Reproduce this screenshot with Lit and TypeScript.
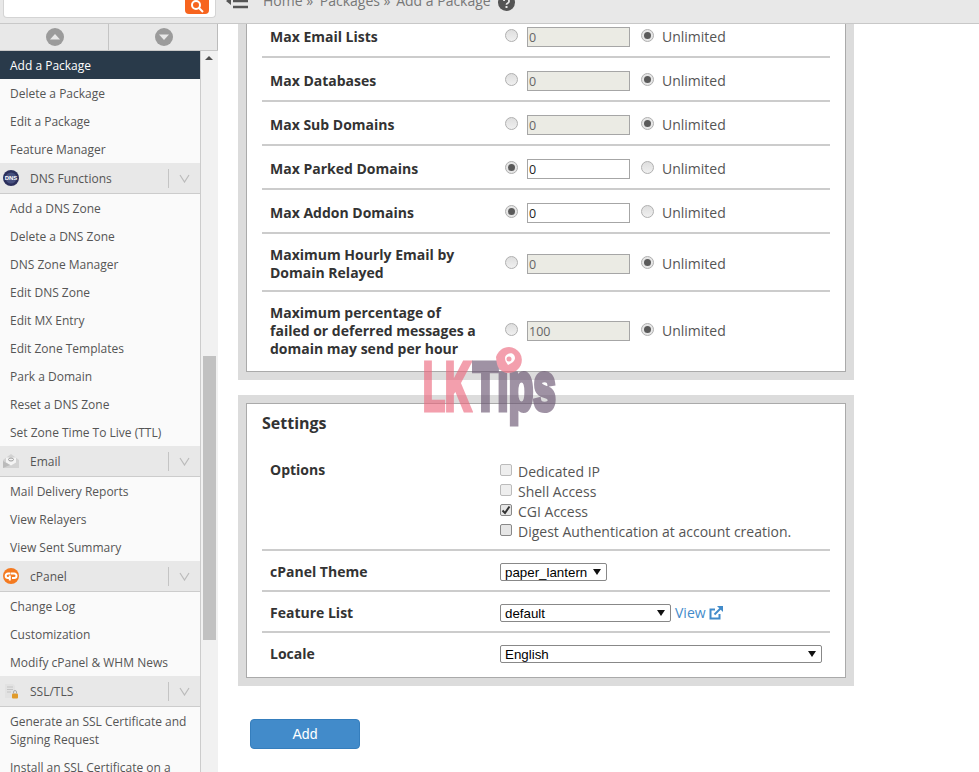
import { LitElement, html, css, svg } from "lit";
import { customElement } from "lit/decorators.js";

type Row = { label: string; val: string; limited: boolean };
const rows: Row[] = [
  { label: "Max Email Lists", val: "0", limited: false },
  { label: "Max Databases", val: "0", limited: false },
  { label: "Max Sub Domains", val: "0", limited: false },
  { label: "Max Parked Domains", val: "0", limited: true },
  { label: "Max Addon Domains", val: "0", limited: true },
  { label: "Maximum Hourly Email by Domain Relayed", val: "0", limited: false },
  { label: "Maximum percentage of failed or deferred messages a domain may send per hour", val: "100", limited: false },
];

const icons: Record<string, unknown> = {
  dns: svg`<svg class="gi" width="16" height="16" viewBox="0 0 16 16"><circle cx="8" cy="8" r="8" fill="#2b2f5c"/><circle cx="8" cy="8" r="5.500" fill="#47507f"/><text x="8" y="10" font-size="6" font-weight="700" text-anchor="middle" fill="#fff" font-family="Liberation Sans">DNS</text></svg>`,
  email: svg`<svg class="gi" width="16" height="16" viewBox="0 0 16 16"><path d="M0 7 8 1l8 6v8H0z" fill="#d2d2d2"/><path d="M3 4.500h10v5l-5 3-5-3z" fill="#f4f4f4"/><ellipse cx="8" cy="6.500" rx="2.500" ry="1.500" fill="none" stroke="#999"/><path d="M0 8l7 4-7 3z" fill="#bbb"/></svg>`,
  cpanel: svg`<svg class="gi" width="16" height="16" viewBox="0 0 16 16"><circle cx="8" cy="8" r="8" fill="#f47a20"/><path d="M7.500 5.500H5a2.300 2.300 0 0 0 0 4.600h1.500M6.800 12.500V7.500M8 5.500h3.200a2.300 2.300 0 0 1 0 4.600H9" fill="none" stroke="#fff" stroke-width="2"/></svg>`,
  ssl: svg`<svg class="gi" width="16" height="16" viewBox="0 0 16 16"><path d="M2 1h8l2 2v12H2z" fill="#e2e2e2"/><path d="M4 4h6M4 6.500h6M4 9h4" stroke="#c4c4c4"/><rect x="9" y="10.500" width="6" height="5" rx="1" fill="#e09a2a"/><path d="M10.500 10.500V9a1.500 1.500 0 0 1 3 0v1.500" fill="none" stroke="#aaa"/></svg>`,
};

type Group = { name?: string; icon?: string; items: string[] };
const groups: Group[] = [
  { items: ["Add a Package", "Delete a Package", "Edit a Package", "Feature Manager"] },
  { name: "DNS Functions", icon: "dns", items: ["Add a DNS Zone", "Delete a DNS Zone", "DNS Zone Manager", "Edit DNS Zone", "Edit MX Entry", "Edit Zone Templates", "Park a Domain", "Reset a DNS Zone", "Set Zone Time To Live (TTL)"] },
  { name: "Email", icon: "email", items: ["Mail Delivery Reports", "View Relayers", "View Sent Summary"] },
  { name: "cPanel", icon: "cpanel", items: ["Change Log", "Customization", "Modify cPanel & WHM News"] },
  { name: "SSL/TLS", icon: "ssl", items: ["Generate an SSL Certificate and Signing Request", "Install an SSL Certificate on a Domain"] },
];

@customElement("app-root")
export class AppRoot extends LitElement {
  static styles = css`
    :host { display: grid; grid-template-columns: 218px 761px; width: 979px; height: 772px; overflow: hidden; position: relative; background: #fff; font-family: "Open Sans", sans-serif; color: #333; }
    .side { display: flex; flex-direction: column; height: 772px; overflow: hidden; }
    .searchwrap { height: 23px; flex: none; background: #e8e8e8; border-bottom: 1px solid #c8c8c8; padding: 0 2px 0 3px; }
    .search { height: 18px; background: #fff; border: 1px solid #d4d4d4; border-top: 0; border-radius: 0 0 4px 4px; box-sizing: border-box; display: flex; justify-content: flex-end; padding-right: 6px; }
    .sbtn { width: 24px; height: 14px; background: #f7641e; border-radius: 0 0 4px 4px; display: flex; justify-content: center; align-items: flex-end; overflow: hidden; }
    .arrows { height: 26px; flex: none; display: grid; grid-template-columns: 109px 109px; background: #e8e8e8; border-bottom: 1px solid #c8c8c8; }
    .arrows div { display: flex; align-items: center; justify-content: center; border-right: 1px solid #c4c4c4; padding-left: 2px; }
    .arrows div:last-child { border-right: 1px solid #bbb; }
    .menuwrap { display: flex; flex: 1; min-height: 0; }
    .menu { width: 201px; flex: none; background: #fafafa; border-right: 1px solid #ccc; box-sizing: border-box; }
    .item { font-size: 12px; line-height: 18px; padding: 6px 10px 4px; color: #555; }
    .item.active { background: #293a4a; color: #fff; }
    .ghead { height: 31px; box-sizing: border-box; background: #e8e8e8; border-bottom: 1px solid #ccc; display: flex; align-items: center; font-size: 12px; color: #555; padding-left: 3px; }
    .gi { flex: none; }
    .nm { margin-left: 11px; flex: 1; }
    .sep { width: 1px; height: 19px; background: #c4c4c4; }
    .chev { width: 31px; display: flex; justify-content: center; }
    .sb { width: 17px; flex: none; background: #f1f1f1; position: relative; }
    .up { position: absolute; left: 4px; top: 5px; width: 0; height: 0; border: 4px solid transparent; border-top: 0; border-bottom: 4px solid #505050; }
    .th { position: absolute; left: 2px; width: 13px; top: 305px; height: 284px; background: #c1c1c1; }
    .main { display: flex; flex-direction: column; height: 772px; overflow: hidden; }
    .top { height: 23px; flex: none; background: #e8e8e8; border-bottom: 1px solid #c8c8c8; overflow: hidden; position: relative; }
    .burger { position: absolute; left: 8px; top: -7px; }
    .crumbs { position: absolute; left: 45px; top: -9px; font-size: 14px; line-height: 20px; color: #777; white-space: nowrap; display: flex; align-items: center; }
    .c1 { margin-right: 3px; }
    .c2 { margin-right: 2px; }
    .help { margin-left: 7px; margin-top: 3px; }
    .scroll { flex: 1; min-height: 0; padding: 0 0 0 20px; }
    .panel { width: 616px; box-sizing: border-box; border: 8px solid #dcdcdc; background: #fff; }
    .inner { border: 1px solid #aaa; padding: 0 15px; }
    .first { margin-top: -19px; }
    .second { margin-top: 15px; }
    .row { display: flex; align-items: center; padding: 12px 0 8px; border-bottom: 2px solid #ccc; min-height: 22px; }
    .row.last { border-bottom: 0; padding-bottom: 13px; }
    .lbl { width: 243px; flex: none; box-sizing: border-box; padding: 0 25px 0 8px; font-size: 14px; line-height: 18px; font-weight: 700; color: #333; }
    .radio { width: 13px; height: 13px; border-radius: 50%; border: 1px solid #b0b0b0; box-sizing: border-box; background: linear-gradient(#dedede, #f0f0f0); flex: none; margin-bottom: 4px; display: flex; align-items: center; justify-content: center; }
    .radio.on { background: #e6e6e6; }
    .radio.on::after { content: ""; width: 7px; height: 7px; border-radius: 50%; background: #5a5a5a; }
    .num { width: 103px; height: 20px; box-sizing: border-box; margin: 0 11px 0 9px; border: 1px solid #a6a6a6; padding: 0 1px; font: 12.500px "Open Sans", sans-serif; color: #222; background: #fff; display: flex; align-items: center; }
    .num.dis { background: #ebebe4; color: #666; }
    .unl { margin-left: 8px; margin-bottom: 2px; font-size: 14px; color: #555; }
    h2 { margin: 0; padding: 8px 0 0; font-size: 16px; line-height: 22px; font-weight: 700; color: #333; }
    .opts { padding-top: 27px; align-items: flex-start; }
    .opts .lbl { width: 238px; }
    .list { display: flex; flex-direction: column; }
    .chk { display: flex; align-items: center; height: 20px; font-size: 14px; color: #555; }
    .box { width: 12px; height: 12px; box-sizing: border-box; border: 1px solid #bbb; border-radius: 2px; background: #eee; margin-right: 6px; margin-bottom: 2px; flex: none; display: flex; align-items: center; justify-content: center; }
    .box.dark { border-color: #888; background: #e6e6e6; }
    .srow { padding: 12px 0 9px; min-height: 18px; }
    .row.srow.last { padding-bottom: 14px; }
    .srow .lbl { width: 238px; }
    .sel { position: relative; height: 18px; box-sizing: border-box; border: 1px solid #888; border-radius: 2px; background: #fff; display: flex; align-items: center; flex: none; font: 13.333px "Liberation Sans", sans-serif; color: #000; padding-left: 4px; }
    .sel::after { content: ""; position: absolute; right: 5px; top: 5px; border: 4px solid transparent; border-bottom: 0; border-top: 6px solid #111; }
    .w1 { width: 107px; } .w2 { width: 171px; } .w3 { width: 322px; }
    .view { margin-left: 4px; font-size: 14px; line-height: 18px; color: #428bca; display: flex; align-items: center; gap: 3px; }
    .add { margin: 33px 0 0 12px; width: 110px; height: 30px; border-radius: 4px; background: #428bca; border: 1px solid #357ebd; color: #fff; font: 14px "Liberation Sans", sans-serif; display: flex; align-items: center; justify-content: center; box-sizing: border-box; }
    .wm { position: absolute; left: 422px; top: 345px; width: 140px; height: 84px; pointer-events: none; opacity: 0.62; }
    .wm span { position: absolute; top: 5px; font: 700 69px/74px "Liberation Sans", sans-serif; transform-origin: 0 0; white-space: nowrap; -webkit-text-stroke: 5px currentColor; }
    .a { left: 1px; color: #ec667c; transform: scaleX(0.52); }
    .b { left: 51px; color: #66506e; transform: scaleX(0.59); }
    .wm svg { position: absolute; left: 73px; top: 1px; }
  `;

  private row(r: Row, i: number) {
    const last = i === rows.length - 1;
    return html`<div class="row ${last ? "last" : ""}">
      <div class="lbl">${r.label}</div>
      <span class="radio ${r.limited ? "on" : ""}"></span>
      <span class="num ${r.limited ? "" : "dis"}">${r.val}</span>
      <span class="radio ${r.limited ? "" : "on"}"></span>
      <span class="unl">Unlimited</span>
    </div>`;
  }

  private chk(t: string, cls = "", on = false) {
    return html`<div class="chk"><span class="box ${cls}">${on
      ? html`<svg width="10" height="10" viewBox="0 0 10 10"><path d="M1.500 5.500 4 8l4.500-6.500" fill="none" stroke="#333" stroke-width="2"/></svg>`
      : ""}</span>${t}</div>`;
  }

  render() {
    return html`
      <div class="side">
        <div class="searchwrap"><div class="search"><div class="sbtn">
          <svg width="14" height="14" viewBox="0 0 14 14"><circle cx="6" cy="5" r="4" fill="none" stroke="#fff" stroke-width="2"/><path d="M9 8l4 4" stroke="#fff" stroke-width="2"/></svg>
        </div></div></div>
        <div class="arrows">
          <div><svg width="18" height="18" viewBox="0 0 18 18"><circle cx="9" cy="9" r="9" fill="#9b9b9b"/><path d="M4 11.500 9 6l5 5.500z" fill="#e8e8e8"/></svg></div>
          <div><svg width="18" height="18" viewBox="0 0 18 18"><circle cx="9" cy="9" r="9" fill="#9b9b9b"/><path d="M4 6.500 9 12l5-5.500z" fill="#e8e8e8"/></svg></div>
        </div>
        <div class="menuwrap">
          <div class="menu">
            ${groups.map((g, gi) => html`
              ${g.name ? html`<div class="ghead">
                ${icons[g.icon!]}<span class="nm">${g.name}</span><span class="sep"></span>
                <span class="chev"><svg width="11" height="9" viewBox="0 0 11 9"><path d="M1 1l4.500 7L10 1" fill="none" stroke="#bbb" stroke-width="1.200"/></svg></span>
              </div>` : ""}
              ${g.items.map((t, i) => html`<div class="item ${gi === 0 && i === 0 ? "active" : ""}">${t}</div>`)}
            `)}
          </div>
          <div class="sb"><span class="up"></span><span class="th"></span></div>
        </div>
      </div>
      <div class="main">
        <div class="top">
          <svg class="burger" width="24" height="16" viewBox="0 0 24 16"><path d="M7 2h15M7 8h15M7 14h15" stroke="#555" stroke-width="2.500"/><path d="M0 8l5-4v8z" fill="#555"/></svg>
          <div class="crumbs"><span class="c1">Home »&nbsp;</span><span class="c2">Packages »&nbsp;</span><span>Add a Package</span>
            <svg class="help" width="17" height="17" viewBox="0 0 17 17"><circle cx="8.500" cy="8.500" r="8.500" fill="#555"/><path d="M6 7a2.500 2.500 0 1 1 3.500 2.300c-.7.300-1 .7-1 1.500" fill="none" stroke="#e8e8e8" stroke-width="1.800"/><rect x="7.500" y="12" width="2" height="2" fill="#e8e8e8"/></svg>
          </div>
        </div>
        <div class="scroll">
          <div class="panel first"><div class="inner">
            ${rows.map((r, i) => this.row(r, i))}
          </div></div>
          <div class="panel second"><div class="inner">
            <h2>Settings</h2>
            <div class="row opts">
              <div class="lbl">Options</div>
              <div class="list">
                ${this.chk("Dedicated IP")}
                ${this.chk("Shell Access")}
                ${this.chk("CGI Access", "dark", true)}
                ${this.chk("Digest Authentication at account creation.", "dark")}
              </div>
            </div>
            <div class="row srow"><div class="lbl">cPanel Theme</div><div class="sel w1">paper_lantern</div></div>
            <div class="row srow"><div class="lbl">Feature List</div><div class="sel w2">default</div>
              <span class="view">View <svg width="14" height="14" viewBox="0 0 14 14"><path d="M10.500 8v4.500h-9v-9H6" fill="none" stroke="#428bca" stroke-width="2"/><path d="M5.500 8.500 12 2" stroke="#428bca" stroke-width="2"/><path d="M8 0h6v6z" fill="#428bca"/></svg></span>
            </div>
            <div class="row srow last"><div class="lbl">Locale</div><div class="sel w3">English</div></div>
          </div></div>
          <div class="add">Add</div>
        </div>
      </div>
      <div class="wm">
        <span class="a">LK</span><span class="b">Tips</span>
        <svg width="28" height="28" viewBox="0 0 28 28"><path d="M14 1a13 13 0 1 1-10 21.500C2 20 1.500 16 1 11 3 5 8 1 14 1z" fill="#ec667c"/><path d="M13 8c3-2 7 0 7 4 0 3-3 5-7 7-2-3-3-4-3-7 0-2 1-3 3-4z" fill="#fff"/><circle cx="14" cy="13" r="2.500" fill="#ec667c"/></svg>
      </div>
    `;
  }
}
